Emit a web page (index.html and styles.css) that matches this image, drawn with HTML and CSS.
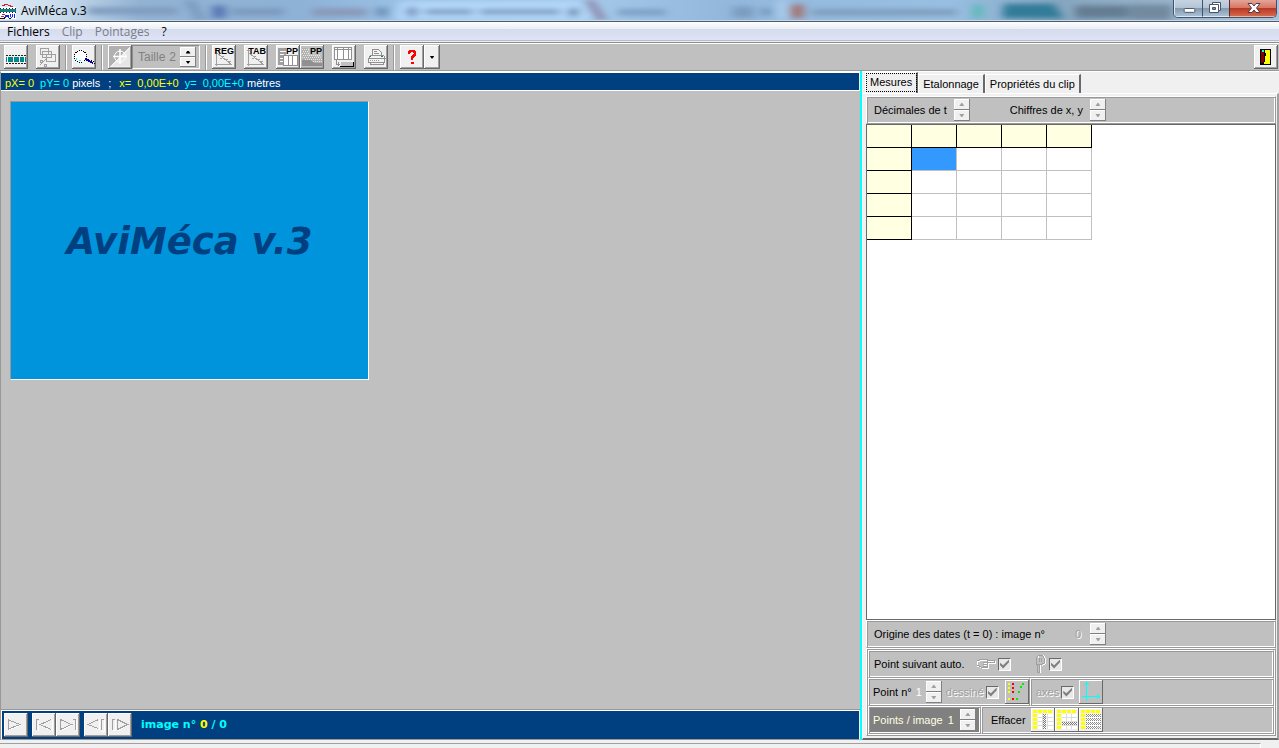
FILE: index.html
```html
<!DOCTYPE html>
<html lang="fr">
<head>
<meta charset="utf-8">
<title>AviMéca v.3</title>
<link rel="stylesheet" href="styles.css">
</head>
<body>
<header class="titlebar">
  <svg class="glass" viewBox="0 0 1279 22" preserveAspectRatio="none" aria-hidden="true">
    <defs><filter id="soft" x="-20%" y="-60%" width="140%" height="220%"><feGaussianBlur stdDeviation="5 3"/></filter></defs>
    <g filter="url(#soft)">
      <rect x="88" y="8" width="90" height="8" fill="#7f9cbf"/>
      <path d="M183 0h12l12 22h-12z" fill="#7c9cc0"/>
      <rect x="212" y="6" width="14" height="14" fill="#5878b4"/>
      <rect x="232" y="9" width="52" height="8" fill="#7b9abd"/>
      <rect x="312" y="9" width="55" height="9" fill="#8999b8"/>
      <rect x="376" y="8" width="12" height="10" fill="#6e92b8"/>
      <path d="M400 2h180l10 20h-195z" fill="#b4d8fa"/>
      <circle cx="412" cy="13" r="6" fill="#7995bd"/>
      <rect x="425" y="10" width="48" height="6" fill="#7d9dc1"/>
      <rect x="480" y="10" width="80" height="6" fill="#7d9dc1"/>
      <rect x="569" y="9" width="9" height="9" fill="#607f9f"/>
      <path d="M585 0h8l14 22h-9z" fill="#8c83a6"/>
      <rect x="618" y="10" width="48" height="7" fill="#7ba0c4"/>
      <rect x="732" y="7" width="22" height="13" fill="#7c9dc0"/>
      <rect x="762" y="9" width="8" height="8" fill="#6c8fb1"/>
      <path d="M778 0h10v22h-10z" fill="#a9cdec"/>
      <rect x="790" y="5" width="14" height="15" fill="#a27774"/>
      <rect x="812" y="10" width="145" height="7" fill="#7f9dbc"/>
      <rect x="972" y="5" width="12" height="15" fill="#63b9bd"/>
      <path d="M1004 4h50l10 16h-62z" fill="#317b98"/>
      <rect x="1075" y="6" width="54" height="14" fill="#657d92"/>
      <rect x="1130" y="5" width="42" height="17" fill="#728a9f"/>
    </g>
  </svg>
  <svg class="appicon" viewBox="0 0 16 16" shape-rendering="crispEdges" aria-hidden="true">
    <path d="M0 4h16v12H0z" fill="#fff"/>
    <path d="M0 6h16v3H0z" fill="#128080"/>
    <path d="M0 5.500h16M0 9.500h16" stroke="#222" stroke-dasharray="1 2"/>
    <path d="M2 2.500h3M4 1.500h4M8 2.500h3M10 3.500h3M2 11.500h3M1 13.500h3" fill="none" stroke="#d22038"/>
    <path d="M5.500 15v-3h3v3M5 13.500h4M10.500 11v3M11.500 15v-1M12.500 11v3M14.500 11v4" fill="none" stroke="#1722f8"/>
    <path d="M0 15.500h5M4 14.500h1M9 15.500h2" fill="none" stroke="#111"/>
  </svg>
  <h1 class="title">AviMéca v.3</h1>
  <div class="winbtns">
    <button class="wb" type="button" aria-label="Réduire"><svg viewBox="0 0 28 17"><rect x="9.500" y="8.500" width="11" height="4" rx="1" fill="#fff" stroke="#4a5468"/></svg></button>
    <button class="wb wb-max" type="button" aria-label="Restaurer"><svg viewBox="0 0 26 17"><path d="M9.500 2.500h8v8h-2v2h-9v-8h3z" fill="#fff" stroke="#4a5468"/><path d="M9.500 7.500h3v2h-3z" fill="#7b8ea8" stroke="#4a5468"/><path d="M9 4.500h6.500v6" fill="none" stroke="#4a5468"/></svg></button>
    <button class="wb wb-close" type="button" aria-label="Fermer"><svg viewBox="0 0 46 17"><path d="M18 3.500h4l2 2.500 2-2.500h4L26.500 8l3.500 4.500h-4L24 10l-2 2.500h-4L21.500 8z" fill="#fff" stroke="#4b3d48"/></svg></button>
  </div>
</header>

<nav class="menubar">
  <button type="button">Fichiers</button>
  <button type="button" disabled>Clip</button>
  <button type="button" disabled>Pointages</button>
  <button type="button">?</button>
</nav>

<div class="toolbar">
  <button class="btn" type="button" aria-label="Ouvrir un clip"><svg viewBox="0 0 24 24"><path d="M2 12h20v5H2z" fill="#088"/><path d="M3.500 12v5m6-5v5m6-5v5m5-5v5" class="w"/><path d="M2 10.500h20M2 18.500h20" stroke="#222" stroke-dasharray="2 1"/></svg></button>
  <button class="btn gap8" type="button" disabled aria-label="Copier"><svg viewBox="0 0 24 24"><path d="M4.500 3.500h8v6h-8zM6.500 6.500h9v6h-9zM10.500 9.500h9v7h-9z" fill="#f0f0f0" stroke="#a0a0a0"/><path d="M10 14l-6 6M4 15h2v2H4zM8 19h2v2H8z" fill="none" stroke="#a0a0a0"/></svg></button>
  <span class="sep"></span>
  <button class="btn" type="button" aria-label="Loupe"><svg viewBox="0 0 24 24"><circle cx="8.500" cy="11.500" r="6" fill="#fff" stroke="#000" stroke-dasharray="1 1"/><path d="M4.500 13v2m2 .5h2" fill="none" stroke="#0ff"/><path d="M13 14l8 4" stroke="#00a" stroke-width="2"/><path d="M14 13l8 4v2" fill="none" stroke="#000" stroke-dasharray="1 1"/></svg></button>
  <span class="sep"></span>
  <button class="btn" type="button" disabled aria-label="Viseur"><svg viewBox="0 0 24 24"><path d="M1 1h21L1 22z" fill="#b0b0b0"/><path d="M14 11L22 3v18H4l5-5z" fill="#e6e6e6"/><g shape-rendering="auto"><circle cx="12" cy="11.500" r="5.500" class="w"/><path d="M12 4v15M5 11.500h14" class="w" stroke-width="1.500"/></g></svg></button>
  <div class="size"><span class="size-text">Taille</span><output>2</output>
    <span class="spin spin-lg"><button type="button" aria-label="Plus"><i class="up"></i></button><button type="button" aria-label="Moins"><i class="down"></i></button></span></div>
  <span class="sep"></span>
  <button class="btn lettered" type="button" aria-label="Regressi"><svg viewBox="0 0 24 24"><path d="M4.500 21V4M2.500 6.500l2-2 2 2M3 19.500h17M5 8l15 12" class="g"/><path d="M8 13h2m0-2h2m2 3h2m0 2h3" class="g"/></svg><b>REG</b></button>
  <button class="btn lettered gap8" type="button" aria-label="Tableau"><svg viewBox="0 0 24 24"><path d="M4.500 21V4M2.500 6.500l2-2 2 2M3 19.500h17M5 8l15 12" class="g"/><path d="M8 13h2m0-2h2m2 3h2m0 2h3" class="g"/></svg><b>TAB</b></button>
  <button class="btn lettered gap8" type="button" aria-label="Copier le tableau"><svg viewBox="0 0 24 24"><path d="M2 3h8v17H2z" fill="#a0a0a0"/><path d="M4 6.500h6M4 9.500h4M4 13.500h3M4 16.500h3" class="w"/><path d="M7.500 10.500h14v10h-14zM12.500 10v10M16.500 10v10" fill="#fff" stroke="#909090"/></svg><b>PP</b></button>
  <button class="btn lettered grey" type="button" aria-label="Copier l'image"><svg viewBox="0 0 24 24"><path d="M2 3h6v8l14 1v9H2z" fill="#b0b0b0"/><path d="M2 4.500h7M3 6.500h5M2 8.500h7M3 10.500h18M2 12.500h20M5 14.500h17M9 16.500h13" stroke="#e8e8e8" stroke-dasharray="1 1"/><path d="M2 15h8l5 3h7v3H2z" fill="#909090"/></svg><b>PP</b></button>
  <button class="btn gap8" type="button" aria-label="Exporter"><svg viewBox="0 0 24 24"><path d="M2.500 2.500h17v12h-17zM5.500 2v12M11.500 2v12M16.500 2v12M3 4.500h16" fill="#fff" stroke="#909090"/><path d="M4.500 15v4h3M6.500 17v4" fill="none" stroke="#909090"/><path d="M9 17h12v4H9z" fill="#c0c0c0"/><path d="M8 21.500h13.500V17" fill="none" stroke="#000"/></svg></button>
  <button class="btn gap8" type="button" disabled aria-label="Imprimer"><svg viewBox="0 0 24 24"><path d="M8.500 10.500v-6h6l3 3v3M10 6.500h3M10 8.500h5M6.500 10.500h13l2 3h-17zM4.500 13.500h16v4h-16zM6.500 17.500h13v2h-13z" fill="#f4f4f4" stroke="#909090"/><path d="M6 15.500h9" class="g" stroke-dasharray="1 1"/><path d="M17 11.500h2M6 11.500h1" stroke="#088"/></svg></button>
  <span class="sep"></span>
  <button class="btn help" type="button" aria-label="Aide"><svg viewBox="0 0 24 24"><path d="M9 9V7h1V6h4v1h1v3h-1v1h-1v1h-1v3M11 18h3" fill="none" stroke="#f00" stroke-width="2"/></svg></button>
  <button class="btn narrow" type="button" aria-label="Options d'aide"><i class="down big"></i></button>
  <button class="btn exit" type="button" aria-label="Quitter"><svg viewBox="0 0 24 24"><path d="M6 4h11v16H6z"/><path d="M11 5h5v14h-6v-2h1z" fill="#ff0"/><path d="M7 5h3v11l-1 2H7z" fill="#800000"/><path d="M8 5h2v2H8z" fill="#0ff"/><path d="M10 8h2v3h-2z"/></svg></button>
</div>

<main class="work">
  <section class="left">
    <div class="info"><span class="y">pX= 0</span><span class="c">pY= 0</span><span class="unit">pixels</span><span class="semi">;</span><span class="y">x=&nbsp; 0,00E+0</span><span class="c">y=&nbsp; 0,00E+0</span><span class="unit">mètres</span></div>
    <div class="canvas"><div class="splash">AviMéca v.3</div></div>
    <div class="player">
      <button class="btn" type="button" disabled aria-label="Lecture"><svg viewBox="0 0 24 24"><path d="M5 16.500L17 12" class="w"/><path d="M4.500 16V7L16 11.500z" class="g"/></svg></button>
      <button class="btn gap4" type="button" disabled aria-label="Début"><svg viewBox="0 0 24 24"><path d="M6.500 18V8M20.500 7v10L9 12.500" class="w"/><path d="M4.500 17V6.500H7M19.500 6.500L8 11.500l11 5" class="g"/></svg></button>
      <button class="btn" type="button" disabled aria-label="Fin"><svg viewBox="0 0 24 24"><path d="M5 17.500L16 12M20.500 7v11" class="w"/><path d="M4.500 16.500v-10l11 5zM19.500 17V6.500H17" class="g"/></svg></button>
      <button class="btn gap4" type="button" disabled aria-label="Image précédente"><svg viewBox="0 0 24 24"><path d="M15.500 7v9.500L5 12M20.500 7v11h-3" class="w"/><path d="M14.500 6.500L4 11.500l10 4M17.500 17V6.500h2" class="g"/></svg></button>
      <button class="btn" type="button" disabled aria-label="Image suivante"><svg viewBox="0 0 24 24"><path d="M7.500 7v10H5M10 17.500L20 12" class="w"/><path d="M4.500 17V6.500h2M9.500 16.500v-10l10 5z" class="g"/></svg></button>
      <span class="frame">image n° <span class="y">0</span> / 0</span>
    </div>
  </section>

  <section class="right">
    <div class="tabs" role="tablist">
      <button class="tab active" role="tab" aria-selected="true" type="button">Mesures</button>
      <button class="tab" role="tab" type="button">Etalonnage</button>
      <button class="tab" role="tab" type="button">Propriétés du clip</button>
    </div>
    <div class="page">
      <div class="panel digits">
        <span>Décimales de t</span>
        <span class="spin"><button type="button" disabled aria-label="Plus"><i class="up"></i></button><button type="button" disabled aria-label="Moins"><i class="down"></i></button></span>
        <span class="digits-xy">Chiffres de x, y</span>
        <span class="spin"><button type="button" disabled aria-label="Plus"><i class="up"></i></button><button type="button" disabled aria-label="Moins"><i class="down"></i></button></span>
      </div>
      <div class="gridbox">
        <table class="grid" aria-label="Mesures">
          <tr><th></th><th></th><th></th><th></th><th></th></tr>
          <tr><th></th><td class="sel"></td><td></td><td></td><td></td></tr>
          <tr><th></th><td></td><td></td><td></td><td></td></tr>
          <tr><th></th><td></td><td></td><td></td><td></td></tr>
          <tr><th></th><td></td><td></td><td></td><td></td></tr>
        </table>
      </div>
      <div class="panel origin">
        <span class="origin-text">Origine des dates (t = 0) : image n°</span>
        <output class="dis">0</output>
        <span class="spin"><button type="button" disabled aria-label="Plus"><i class="up"></i></button><button type="button" disabled aria-label="Moins"><i class="down"></i></button></span>
      </div>
      <div class="group">
        <div class="row"><div class="panel fill">
          <span class="auto">Point suivant auto.</span>
          <label class="check"><svg class="hand" viewBox="0 0 20 14"><path d="M2 5l4-2h6v1h7v2h-7M11 6H8m3 2H8m3 2H8M12 4v7H6L2 9M1 4v6" class="w"/><path d="M1 4l4-2h6v1h7v2h-7m0 0H7m4 2H7m4 2H7M11 3v7H5L1 8" class="g"/></svg><input type="checkbox" checked disabled aria-label="Horizontal"></label>
          <label class="check second"><svg class="finger" viewBox="0 0 14 20"><path d="M4.500 4.500l2-3h4l2 3v5l-3 2M7.500 10v8h-2" class="w"/><path d="M3.500 10.500v-7l2-2h4l2 3v4l-3 2h-5M4.500 11v7h2v-8M6.500 4v4M8.500 4v4" class="g"/></svg><input type="checkbox" checked disabled aria-label="Vertical"></label>
        </div></div>
        <div class="row">
          <div class="panel point"><span>Point n°</span><output class="white">1</output>
            <span class="spin"><button type="button" disabled aria-label="Plus"><i class="up"></i></button><button type="button" disabled aria-label="Moins"><i class="down"></i></button></span>
            <label class="check dis">dessiné<input type="checkbox" checked disabled></label>
            <button class="btn mini flat" type="button" aria-label="Couleurs"><svg viewBox="0 0 24 24"><path d="M3 3h2v2H3zM3 7h2v2H3zM3 11h2v2H3zM3 18h2v2H3z" fill="#ff0"/><path d="M7 3h2v2H7zM7 7h2v2H7zM7 11h2v2H7zM7 18h2v2H7z" fill="red"/><path d="M17 3h2v2h-2zM15 6h2v2h-2zM13 11h2v2h-2zM11 18h2v2h-2z" fill="#0e0"/></svg></button>
          </div>
          <div class="panel fill axes"><label class="check dis">axes<input type="checkbox" checked disabled></label>
            <button class="btn mini flat" type="button" aria-label="Axes"><svg viewBox="0 0 24 24"><path d="M7 2h1v19H7zM3 16h18v1H3zM6 3h3v1H6zM5 4h1v1H5zM9 4h1v1H9zM19 15h1v3h-1zM18 14h1v1h-1zM18 18h1v1h-1z" fill="#0ff"/></svg></button></div>
        </div>
        <div class="row">
          <div class="panel perimg"><span>Points / image</span><output>1</output>
            <span class="spin"><button type="button" disabled aria-label="Plus"><i class="up"></i></button><button type="button" disabled aria-label="Moins"><i class="down"></i></button></span></div>
          <div class="panel fill erase"><span>Effacer</span>
            <div class="trio">
            <button class="btn mini" type="button" aria-label="Effacer la colonne"><svg viewBox="0 0 24 24"><path d="M7 6h15v15H7z" fill="#fff"/><path d="M2 3.500h20" stroke="#ff0" stroke-width="3" stroke-dasharray="4 1"/><path d="M4 6v15" stroke="#ff0" stroke-width="4" stroke-dasharray="3 1"/><path d="M7 9.500h15M7 13.500h15M7 17.500h15M11.500 6v15M16.500 6v15" stroke="#ddd"/><path d="M12.500 6v15m2-15v15" stroke="#777" stroke-dasharray="1 1"/><path d="M13.500 7v14" stroke="#777" stroke-dasharray="1 1"/></svg></button>
            <button class="btn mini" type="button" aria-label="Effacer la ligne"><svg viewBox="0 0 24 24"><path d="M7 6h15v15H7z" fill="#fff"/><path d="M2 3.500h20" stroke="#ff0" stroke-width="3" stroke-dasharray="4 1"/><path d="M4 6v15" stroke="#ff0" stroke-width="4" stroke-dasharray="3 1"/><path d="M7 9.500h15M7 13.500h15M7 17.500h15M11.500 6v15M16.500 6v15" stroke="#ddd"/><path d="M7 14.500h15M7 16.500h15" stroke="#777" stroke-dasharray="1 1"/><path d="M8 15.500h14" stroke="#777" stroke-dasharray="1 1"/></svg></button>
            <button class="btn mini" type="button" aria-label="Tout effacer"><svg viewBox="0 0 24 24"><path d="M7 6h15v15H7z" fill="#fff"/><path d="M2 3.500h20" stroke="#ff0" stroke-width="3" stroke-dasharray="4 1"/><path d="M4 6v15" stroke="#ff0" stroke-width="4" stroke-dasharray="3 1"/><path d="M7 6.500h15M7 8.500h15M7 10.500h15M7 12.500h15M7 14.500h15M7 16.500h15M7 18.500h15M7 20.500h15" stroke="#888" stroke-dasharray="1 1"/><path d="M8 7.500h14M8 11.500h14M8 15.500h14M8 19.500h14" stroke="#999" stroke-dasharray="1 1"/></svg></button>
            </div>
          </div>
        </div>
      </div>
    </div>
  </section>
</main>
<footer class="status"><span></span></footer>
</body>
</html>
```
FILE: styles.css
```css
* { box-sizing: border-box; }
html, body { height: 100%; }
body {
  margin: 0;
  display: flex;
  flex-direction: column;
  overflow: hidden;
  background: #f0f0f0;
  color: #000;
  font: 11px/14px "Liberation Sans", Arial, sans-serif;
  white-space: nowrap;
}
button { font: inherit; color: inherit; margin: 0; padding: 0; border: 0; background: none; }
svg { display: block; }
i { display: block; }
.g { fill: none; stroke: #a0a0a0; }
.w { fill: none; stroke: #fff; }
.y { color: #ff0; }
.c { color: #0ff; }

/* title bar */
.titlebar {
  position: relative;
  flex: none;
  display: flex;
  height: 22px;
  border-bottom: 1px solid #4c5a70;
  box-shadow: inset 0 -1px #c8d8e8;
  background: linear-gradient(90deg, #dfeaf5 0, #c8dbec 60px, #93b3d3 140px, #8db2d6 300px, #9cc3e8 420px, #a4c9ea 580px, #93b8dc 720px, #98bfe2 950px, #86a6c0 1060px, #a9c2da 1279px);
}
.glass { position: absolute; inset: 0; width: 100%; height: 20px; overflow: hidden; }
.appicon { position: relative; width: 16px; height: 16px; margin-top: 3px; }
.title { position: relative; margin: 2px 0 0 5px; font: 12px/18px "Open Sans", "Noto Sans", sans-serif; }
.winbtns {
  position: relative;
  display: flex;
  height: 18px;
  margin: 0 2px 0 auto;
  border: 1px solid #40536c;
  border-top: 0;
  border-radius: 0 0 5px 5px;
  overflow: hidden;
}
.wb { width: 28px; background: linear-gradient(#c6d3e1 0, #b4c3d4 48%, #8397ae 50%, #a9c0d4 100%); border: solid #dce7f1; border-width: 0 0 1px 1px; }
.wb svg { width: 100%; height: 17px; }
.wb-max { width: 27px; border-left-color: #40536c; }
.wb-close { width: 47px; border-left-color: #5b2a2a; background: linear-gradient(#e6a497 0, #d77766 48%, #b93520 50%, #d5674d 100%); border-bottom-color: #efb29f; }

/* menu bar */
.menubar {
  flex: none;
  display: flex;
  align-items: center;
  gap: 12px;
  height: 20px;
  padding-left: 7px;
  border-bottom: 1px solid #f0f0f0;
  box-shadow: inset 0 -1px #b4bdd0;
  background: linear-gradient(#fff 0, #e9edf5 7px, #d5dcee 7px, #dfe4f6 19px);
  font: 12px/18px "Open Sans", "Noto Sans", sans-serif;
}
.menubar button:disabled { color: #7a7c84; }

/* tool bar */
.toolbar {
  flex: none;
  display: flex;
  align-items: center;
  height: 29px;
  padding: 1px 1px 0 4px;
  background: #c0c0c0;
  border-top: 1px solid #8c8c8c;
  border-bottom: 1px solid #999;
  box-shadow: inset 0 1px #fff;
}
.btn {
  position: relative;
  flex: none;
  width: 24px;
  height: 24px;
  background: #f0f0f0;
  box-shadow: inset -1px -1px #696969, inset 1px 1px #fff, inset -2px -2px #a0a0a0;
}
.btn svg { width: 24px; height: 24px; shape-rendering: crispEdges; }
.grey { background: #c0c0c0; }
.gap8 { margin-left: 8px; }
.gap4 { margin-left: 4px; }
.narrow { width: 16px; }
.exit { margin-left: auto; }
.lettered b { position: absolute; top: 1px; right: 2px; font: bold 9px/10px "Liberation Sans", Arial, sans-serif; }
.sep { width: 2px; height: 25px; margin: 0 5px; background: linear-gradient(90deg, #999 50%, #fff 50%); }
.size {
  display: flex;
  align-items: center;
  gap: 4px;
  height: 24px;
  padding: 0 3px 0 5px;
  border: 1px solid #8c8c8c;
  border-color: #8c8c8c #fff #fff #8c8c8c;
  color: #808080;
  font-size: 12px;
}

/* spin buttons */
.spin { flex: none; display: flex; flex-direction: column; width: 16px; height: 22px; }
.spin-lg { height: 20px; }
.spin button {
  display: flex;
  align-items: center;
  justify-content: center;
  flex: 1;
  background: #f0f0f0;
  box-shadow: inset -1px -1px #808080, inset 1px 1px #fff;
}
.up, .down { width: 5px; height: 3px; background: #000; clip-path: polygon(40% 0, 60% 0, 100% 100%, 0 100%); }
.down { clip-path: polygon(0 0, 100% 0, 60% 100%, 40% 100%); }
.big { margin: auto; }
.spin button:disabled i { background: #a0a0a0; }

/* work area */
.work { flex: 1; display: flex; min-height: 0; }
.left { flex: 1; min-width: 0; display: flex; flex-direction: column; border-left: 1px solid #999; background: #c0c0c0; border-top: 1px solid #fff; }
.info {
  flex: none;
  display: flex;
  align-items: center;
  height: 19px;
  padding: 2px 0 0 4px;
  background: #004080;
  border: 1px solid #fff;
  border-left-width: 0;
  color: #fff;
  gap: 6px;
}
.unit { margin-left: -3px; }
.info .semi { margin: 0 2px; }
.canvas { flex: 1; min-height: 0; padding: 9px; border-top: 1px solid #c0c0c0; border-bottom: 1px solid #999; }
.splash {
  display: flex;
  align-items: center;
  justify-content: center;
  width: 359px;
  height: 279px;
  padding-top: 3px;
  border: 1px solid #999;
  border-color: #999 #fff #fff #999;
  background: #0094dc;
  color: #004080;
  font: italic bold 37px/44px "DejaVu Sans", Verdana, sans-serif;
}
.player {
  flex: none;
  display: flex;
  align-items: center;
  height: 30px;
  padding: 1px 2px;
  background: #004080;
  border: 1px solid #fff;
  border-bottom-color: #999;
}
.frame { margin-left: 9px; color: #0ff; font: bold 11px/14px "DejaVu Sans", Verdana, sans-serif; }

/* right pane */
.right { flex: 0 0 419px; display: flex; flex-direction: column; border-left: 2px solid #0ff; }
.tabs { display: flex; align-items: flex-end; height: 22px; padding-left: 3px; border-top: 1px solid #fff; }
.tab {
  height: 19px;
  padding: 0 4px 1px;
  border-top: 1px solid #fff;
  border-left: 1px solid #fff;
  border-right: 2px solid #696969;
}
.tab.active { height: 21px; padding: 0 4px 3px; outline: 1px dotted #000; outline-offset: -2px; }
.page {
  flex: 1;
  min-height: 0;
  display: flex;
  flex-direction: column;
  padding: 2px 1px 1px 3px;
  border: 1px solid #fff;
  border-right: 2px solid #a0a0a0;
  border-bottom: 2px solid #696969;
}
.panel {
  flex: none;
  display: flex;
  align-items: center;
  height: 28px;
  padding: 0 1px 0 7px;
  background: #c0c0c0;
  border: 1px solid #fff;
  border-color: #fff #999 #999 #fff;
  box-shadow: inset 1px 1px #999, inset -1px -1px #fff;
}
.digits { gap: 7px; }
.digits-xy { margin-left: 33px; }
.gridbox { flex: 1; min-height: 0; background: #fff; border: 1px solid #696969; }
.grid { border-collapse: separate; border-spacing: 0; }
.grid th, .grid td { width: 45px; height: 23px; padding: 0; border: solid #c0c0c0; border-width: 0 1px 1px 0; }
.grid th { background: #ffffe1; border-color: #000; }
.grid .sel { background: #3399ff; }
.dis { color: #a0a0a0; text-shadow: 1px 1px #fff; }
.origin-text { width: 201px; }
.origin .spin { margin-left: 9px; }
.group { margin-bottom: 1px; border: 1px solid #fff; border-color: #fff #999 #999 #fff; box-shadow: inset 1px 1px #999, inset -1px -1px #fff; padding: 1px; }
.row { display: flex; }
.row .panel { padding-left: 5px; }
.row .fill { flex: 1; }
.auto { width: 102px; }
.check { display: flex; align-items: center; gap: 2px; }
.second { margin-left: 22px; }
.check svg { shape-rendering: crispEdges; }
.hand { width: 20px; height: 14px; }
.finger { width: 14px; height: 20px; }
.check input {
  appearance: none;
  display: flex;
  width: 13px;
  height: 13px;
  margin: 0;
  background: #e8e8e8;
  border: 1px solid;
  border-color: #696969 #fff #fff #696969;
}
.check input:checked::before { content: ""; width: 9px; height: 9px; margin: 1px; background: #808080; clip-path: polygon(0 35%, 35% 65%, 100% 0, 100% 30%, 35% 100%, 0 65%); }
.row .point { width: 162px; padding-left: 4px; gap: 4px; }
.white { color: #fff; }
.point .mini { margin-left: 2px; }
.mini { box-shadow: inset -1px -1px #696969, inset 1px 1px #fff; }
.flat { background: #c0c0c0; }
.axes { gap: 5px; }
.row .perimg { width: 113px; padding-left: 4px; gap: 6px; background: #808080; color: #ffffe1; }
.perimg output { margin-left: -1px; }
.row .erase { padding-left: 9px; gap: 5px; }
.trio { display: flex; }

/* status bar */
.status { flex: none; height: 8px; padding: 3px 18px 0 0; }
.status span { display: block; height: 5px; border-top: 1px solid #a0a0a0; border-right: 1px solid #fff; }
```
